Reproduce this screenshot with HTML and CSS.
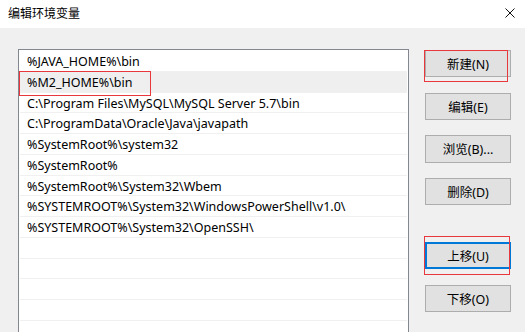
FILE: index.html
```html
<!DOCTYPE html>
<html lang="zh-CN">
<head>
<meta charset="utf-8">
<title>编辑环境变量</title>
<link rel="stylesheet" href="styles.css">
</head>
<body>
<div class="dialog">
  <div class="titlebar">
    <span class="title">编辑环境变量</span>
    <svg class="close" width="10" height="10" viewBox="0 0 10 10"><path d="M0.5 0.5 L9.5 9.5 M9.5 0.5 L0.5 9.5" stroke="#111" stroke-width="1" fill="none"/></svg>
  </div>
  <div class="body">
    <div class="list">
      <div class="row">%JAVA_HOME%\bin</div>
      <div class="row selected">%M2_HOME%\bin</div>
      <div class="row">C:\Program Files\MySQL\MySQL Server 5.7\bin</div>
      <div class="row">C:\ProgramData\Oracle\Java\javapath</div>
      <div class="row">%SystemRoot%\system32</div>
      <div class="row">%SystemRoot%</div>
      <div class="row">%SystemRoot%\System32\Wbem</div>
      <div class="row">%SYSTEMROOT%\System32\WindowsPowerShell\v1.0\</div>
      <div class="row">%SYSTEMROOT%\System32\OpenSSH\</div>
      <div class="row"></div>
      <div class="row"></div>
      <div class="row"></div>
      <div class="row"></div>
      <div class="row"></div>
    </div>
    <div class="buttons">
      <button class="btn">新建(N)</button>
      <button class="btn">编辑(E)</button>
      <button class="btn">浏览(B)...</button>
      <button class="btn">删除(D)</button>
      <button class="btn focused">上移(U)</button>
      <button class="btn">下移(O)</button>
    </div>
  </div>
  <div class="mark mark-row"></div>
  <div class="mark mark-new"></div>
  <div class="mark mark-up"></div>
</div>
</body>
</html>
```
FILE: styles.css
```css
* { box-sizing: border-box; }
html, body {
  margin: 0;
  padding: 0;
  width: 525px;
  height: 332px;
  overflow: hidden;
  background: #f0f0f0;
  font-family: "Noto Sans", "Noto Sans CJK SC", sans-serif;
  font-size: 12.5px;
  color: #000;
}
.dialog {
  position: relative;
  width: 525px;
  height: 332px;
  overflow: hidden;
}
.titlebar {
  height: 28px;
  background: #fff;
  display: flex;
  align-items: center;
  justify-content: space-between;
  padding: 0 10px 2px 8px;
}
.title {
  font-family: "Noto Sans CJK SC", sans-serif;
  font-size: 12px;
  line-height: 16px;
}
.close { display: block; }
.body {
  display: flex;
  align-items: flex-start;
  padding: 21px 0 0 18px;
}
.list {
  width: 391px;
  height: 283px;
  overflow: hidden;
  background: #fff;
  border: 1px solid #828790;
  border-bottom: none;
  padding: 1px 1px 0 1px;
}
.row {
  height: 20.75px;
  line-height: 20px;
  padding: 1px 0 0 7px;
  border-bottom: 1px solid #f0f0f0;
  white-space: nowrap;
}
.row.selected { background: #efefef; }
.buttons {
  margin-left: 16px;
  margin-top: 1px;
  display: flex;
  flex-direction: column;
  gap: 15.33px;
}
.btn {
  width: 86px;
  height: 27.33px;
  background: #e1e1e1;
  border: 1px solid #adadad;
  font-family: "Noto Sans", "Noto Sans CJK SC", sans-serif;
  font-size: 12.5px;
  color: #000;
  padding: 0;
  margin: 0;
}
.btn.focused {
  margin-top: 21.33px;
  border: 2px solid #0078d7;
}
.mark {
  position: absolute;
  border: 1px solid #e8383d;
}
.mark-row { left: 19px; top: 71px; width: 132px; height: 25px; }
.mark-new { left: 424px; top: 50px; width: 84px; height: 32px; }
.mark-up { left: 424px; top: 236px; width: 86px; height: 39px; }
```
